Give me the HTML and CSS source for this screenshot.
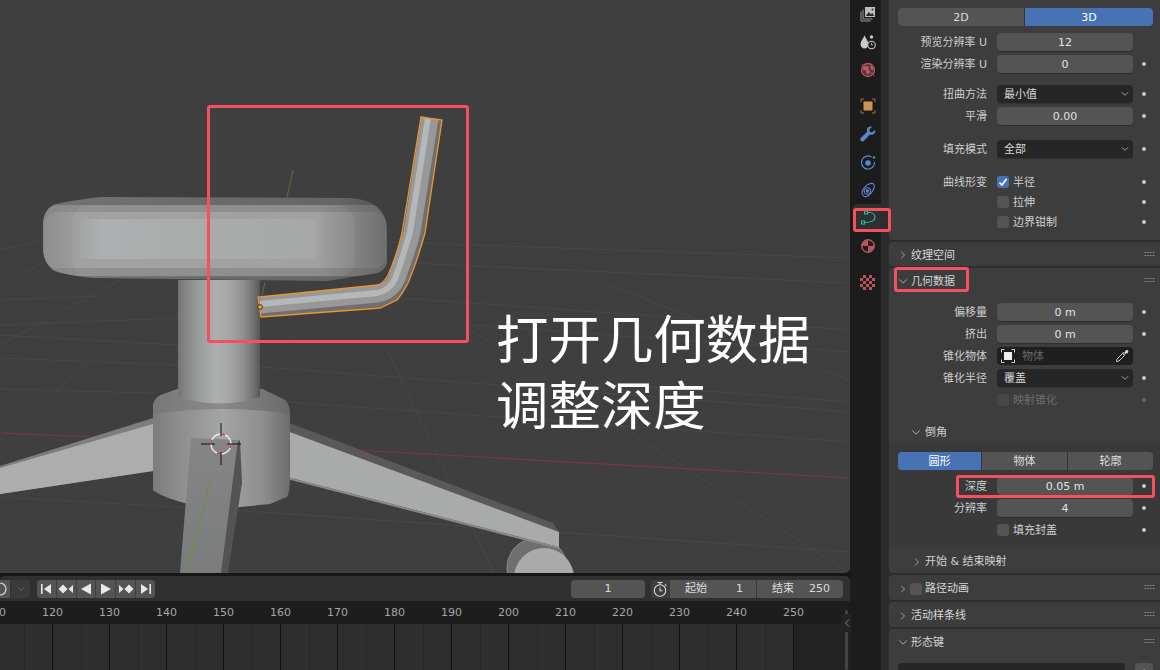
FILE: index.html
```html
<!DOCTYPE html>
<html lang="zh">
<head>
<meta charset="utf-8">
<title>Blender</title>
<link rel="stylesheet" href="styles.css">
</head>
<body>
<svg class="defs" width="0" height="0">
  <symbol id="chev-r" viewBox="0 0 8 12"><path d="M1.500 1.500 6 6l-4.500 4.500" fill="none" stroke="currentColor" stroke-width="1.200"/></symbol>
  <symbol id="chev-d" viewBox="0 0 12 8"><path d="M1.500 1.500 6 6l4.500-4.500" fill="none" stroke="currentColor" stroke-width="1.200"/></symbol>
</svg>
<div class="app">
  <div class="left">
    <div class="viewport">
      <svg class="scene" viewBox="0 0 850 573" width="850" height="573">
        <defs>
          <linearGradient id="cyl" x1="0" x2="1" y1="0" y2="0">
            <stop offset="0" stop-color="#747474"/><stop offset=".1" stop-color="#868686"/>
            <stop offset=".25" stop-color="#999a9a"/><stop offset=".45" stop-color="#adafaf"/>
            <stop offset=".62" stop-color="#a6a7a7"/><stop offset=".8" stop-color="#8f8f8f"/>
            <stop offset=".93" stop-color="#707070"/><stop offset="1" stop-color="#555"/>
          </linearGradient>
          <linearGradient id="collar" x1="0" x2="1" y1="0" y2="0">
            <stop offset="0" stop-color="#7b7b7b"/><stop offset=".2" stop-color="#8e8e8e"/>
            <stop offset=".5" stop-color="#a4a5a5"/><stop offset=".8" stop-color="#8e8e8e"/>
            <stop offset="1" stop-color="#6c6c6c"/>
          </linearGradient>
          <linearGradient id="rim" x1="0" x2="1" y1="0" y2="0">
            <stop offset="0" stop-color="#777"/><stop offset=".5" stop-color="#8a8a8a"/><stop offset="1" stop-color="#6a6a6a"/>
          </linearGradient>
          <linearGradient id="front" x1="0" x2="0" y1="0" y2="1">
            <stop offset="0" stop-color="#858585"/><stop offset="1" stop-color="#7b7c7c"/>
          </linearGradient>
          <linearGradient id="s1" x1="0" x2="1" y1="0" y2="0">
            <stop offset="0" stop-color="#727272"/><stop offset=".85" stop-color="#656565"/><stop offset="1" stop-color="#555"/>
          </linearGradient>
          <linearGradient id="s2" x1="0" x2="1" y1="0" y2="0">
            <stop offset="0" stop-color="#858585"/><stop offset=".08" stop-color="#8c8c8c"/><stop offset=".8" stop-color="#868686"/><stop offset="1" stop-color="#676767"/>
          </linearGradient>
          <linearGradient id="s3" x1="0" x2="1" y1="0" y2="0">
            <stop offset="0" stop-color="#8e8e8e"/><stop offset=".1" stop-color="#9c9c9c"/><stop offset=".8" stop-color="#9c9c9c"/><stop offset=".9" stop-color="#858585"/><stop offset="1" stop-color="#6f6f6f"/>
          </linearGradient>
          <linearGradient id="s4" x1="0" x2="1" y1="0" y2="0">
            <stop offset="0" stop-color="#a3a4a4"/><stop offset=".08" stop-color="#adafb0"/><stop offset=".5" stop-color="#a9abab"/><stop offset=".86" stop-color="#a7a8a8"/><stop offset=".92" stop-color="#989898"/><stop offset="1" stop-color="#8d8d8d"/>
          </linearGradient>
          <clipPath id="seatClip"><path d="M43 223Q44 210 53 205Q60 202 100 197L350 198Q368 199 377 207Q387 216 387 230V263Q384 271 377 273L327 281L93 278Q65 275 53 270Q44 262 43 250Z"/></clipPath>
          <clipPath id="backClip"><path d="M421 117 442 120 425 233Q417 262 408 283 403 293 397 300L380 308 261 317 258 297 378 285Q384 283 388 275 396 258 402 233Z"/></clipPath>
        </defs>
        <g class="grid">
          <path d="M0 358 178 365M0 389 153 393M262 367 850 412M287 402 850 442M0 497 230 510 850 552M103 350 0 440M387 350 494 573M600 383 850 402"/>
          <path d="M0 287 43 263M0 250 43 240M0 300 100 296M0 325 178 318M0 335 178 345M387 262 850 283M400 298 850 330M470 325 850 352M387 242 850 258M300 330 178 445M470 330 850 573M610 285 850 380M120 280 0 345"/>
        </g>
        <path d="M0 433 92 437M356 450 850 478" stroke="#79363f" stroke-width="1.200" fill="none"/>
        <path d="M293 170 287 197M265 282 260 305" stroke="#55693a" stroke-width="1.200" fill="none"/>
        <!-- wheel -->
        <circle cx="537" cy="568" r="30" fill="#6f6f6f" stroke="#8e8e8e"/>
        <circle cx="544" cy="578" r="30" fill="#a9aaaa"/>
        <!-- legs -->
        <path d="M0 466 153 418V471L0 494Z" fill="#7d7d7d"/>
        <path d="M0 468 153 424V471L0 494Z" fill="#adadad"/>
        <path d="M287 422 553 523 559 532V547L287 477Z" fill="#5a585a"/>
        <path d="M287 431 559 532V547L287 477Z" fill="#a9aaaa"/>
        <path d="M287 477 559 547V549L287 479Z" fill="#8a8a8a"/>
        <!-- collar -->
        <path d="M153 405Q154 398 161 395L178 389H262L285 400Q290 406 290 417V478Q290 492 287 497L270 504 230 508 184 503Q160 496 153 490Z" fill="url(#collar)"/>
        <path d="M153 408Q154 398 161 395L178 389H262L285 400Q290 406 290 414Q225 404 153 414Z" fill="url(#rim)"/>
        <!-- column -->
        <path d="M178 280V397Q219 410 260 397V280Z" fill="url(#cyl)"/>
        <!-- seat -->
        <g clip-path="url(#seatClip)">
          <rect x="40" y="195" width="350" height="90" fill="url(#s1)"/>
          <rect x="42" y="205" width="346" height="71" rx="16" fill="url(#s2)"/>
          <rect x="44" y="212" width="342" height="56" rx="12" fill="url(#s3)"/>
          <rect x="72" y="205" width="283" height="72" rx="18" fill="#fff" opacity=".05"/>
          <rect x="80" y="219" width="270" height="40" rx="3" fill="url(#s4)"/>
        </g>
        <!-- back -->
        <g clip-path="url(#backClip)">
          <path class="tube t1" d="M260 307 378 296Q392 294 398 282 407 260 414 233L432 119"/>
          <path class="tube t2" d="M260 305 377 294Q390 292 396 280 405 258 412 232L430 118"/>
          <path class="tube t3" d="M260 304 377 293Q389 291 395 279 403 257 410 232L428 118"/>
        </g>
        <path d="M421 117 442 120 425 233Q417 262 408 283 403 293 397 300L380 308 261 317 258 297 378 285Q384 283 388 275 396 258 402 233Z" fill="none" stroke="#ee952c" stroke-width="1.300"/>
        <circle cx="260" cy="307" r="2.400" fill="#f09a2e" stroke="#222" stroke-width=".8"/>
        <!-- front leg -->
        <path d="M240 440 242 483 228 573H215L232 445Z" fill="#545254"/>
        <path d="M191 438 238 440 221 573H180Z" fill="url(#front)"/>
        <path d="M210 483 186 573" stroke="#6f8f3f" stroke-width="1.100" fill="none"/>
        <!-- cursor -->
        <g fill="none">
          <circle cx="221" cy="444" r="10" stroke="#e9e9e9" stroke-width="1.400"/>
          <circle cx="221" cy="444" r="10" stroke="#d8333b" stroke-width="1.400" stroke-dasharray="4 11.700"/>
          <path d="M221 423V436M221 452V465M201 444H215M227 444H241" stroke="#111" stroke-width="1"/>
        </g>
      </svg>
      <div class="caption">打开几何数据<br>调整深度</div>
      <div class="mark mark-view"></div>
    </div>
    <div class="tl-head">
      <div class="tl-start">
        <span class="tl-cut"><svg width="10" height="18" viewBox="0 0 10 18"><circle cx="0" cy="9" r="6" fill="none" stroke="#d8d8d8" stroke-width="1.200"/></svg></span>
        <span class="tl-drop"><svg width="8" height="6"><use href="#chev-d"/></svg></span>
      </div>
      <div class="play">
        <span class="pbtn"><svg viewBox="0 0 14 12" width="14" height="12"><path d="M2 1h1.600v10H2zM12 1v10L5 6z"/></svg></span>
        <span class="pbtn"><svg viewBox="0 0 16 12" width="16" height="12"><path d="M5 1.500 9.500 6 5 10.500.5 6zM15 2v8L10.500 6z"/></svg></span>
        <span class="pbtn"><svg viewBox="0 0 14 12" width="14" height="12"><path d="M12 .5v11L2 6z"/></svg></span>
        <span class="pbtn"><svg viewBox="0 0 14 12" width="14" height="12"><path d="M2 .5v11L12 6z"/></svg></span>
        <span class="pbtn"><svg viewBox="0 0 16 12" width="16" height="12"><path d="M1 2v8l4.500-4zM11 1.500 15.500 6 11 10.500 6.500 6z"/></svg></span>
        <span class="pbtn"><svg viewBox="0 0 14 12" width="14" height="12"><path d="M12 1h-1.600v10H12zM2 1v10l7-5z"/></svg></span>
      </div>
      <div class="tl-frame">1</div>
      <div class="tl-range">
        <span class="tl-clock"><svg viewBox="0 0 16 16" width="16" height="16" fill="none" stroke="#d8d8d8" stroke-width="1.100"><circle cx="8" cy="9.500" r="5.700"/><path d="M5.500 1.500h5M8 1.500v2.300M8 6.500v3.300h2.500M13 3.500l1.300 1.300"/></svg></span>
        <span class="tl-val"><span>起始</span><span>1</span></span>
        <span class="tl-val tl-end"><span>结束</span><span>250</span></span>
      </div>
    </div>
    <div class="tl-ruler">
      <span>110</span><span>120</span><span>130</span><span>140</span><span>150</span><span>160</span><span>170</span><span>180</span><span>190</span><span>200</span><span>210</span><span>220</span><span>230</span><span>240</span><span>250</span>
    </div>
    <div class="tl-tracks">
      <div class="tl-range-bg"></div>
      <div class="tl-scroll"></div>
      <div class="tl-tab"><svg width="6" height="10"><use href="#chev-r" transform="matrix(-1 0 0 1 6 0)"/></svg></div>
    </div>
  </div>

  <nav class="tabs">
    <div class="tab"><svg viewBox="0 0 16 16"><path d="M1 5.500V15h9.500M3 3.500V13h9.500" fill="none" stroke="#9a9a9a"/><rect x="5" y="1" width="10" height="10" fill="#bdbdbd"/><path d="M5.800 10l3-4 2 2.300 1.500-1.300 2 3z" fill="#2a2a2a"/><circle cx="12.500" cy="3.500" r="1" fill="#2a2a2a"/></svg></div>
    <div class="tab"><svg viewBox="0 0 16 16"><path d="M4.500 1.500C5.500 4 8.500 7 8.500 10.500 8.500 12.800 6.500 14.500 4.500 14.500S.5 12.800.5 10.500C.5 7 3.500 4 4.500 1.500Z" fill="#c9c9c9"/><circle cx="11.500" cy="3" r="1.700" fill="#c9c9c9"/><circle cx="11.500" cy="11" r="3.800" fill="#1d1d1d" stroke="#c9c9c9" stroke-width="1.100"/><path d="M11.500 9v2h1.500" fill="none" stroke="#c9c9c9" stroke-width=".8"/></svg></div>
    <div class="tab"><svg viewBox="0 0 16 16"><circle cx="8" cy="8" r="6.500" fill="#5b343a" stroke="#b2555f" stroke-width="1.300"/><path d="M3 5.500 6 4l3 1-1 2.500 2 1.500-1.500 3.500-2-1-.5-3L3 7.500zM10 3l2.500 1.500 1 3-2 .5z" fill="#b9606a"/><path d="M1.500 2 14.500 14" stroke="#b2555f"/></svg></div>
    <div class="tab tab-gap"><svg viewBox="0 0 16 16"><path d="M1 4V1h3M12 1h3v3M15 12v3h-3M4 15H1v-3" fill="none" stroke="#9a7048" stroke-width="1"/><rect x="3.500" y="3.500" width="9" height="9" fill="#d0924f"/></svg></div>
    <div class="tab"><svg viewBox="0 0 16 16"><path d="M15 3.800 12.200 6.400 9.800 5.800 9.400 3.400 12.100.8C9.800 0 7.500 1 7 3.200c-.2 1 0 1.800.2 2.500L1 11.800c-1 1-1 2 0 3s2.100.8 3-.1l6-6.100c.8.300 1.800.3 2.800 0 2.200-.7 3-3 2.200-4.800Z" fill="#5a86cc"/></svg></div>
    <div class="tab"><svg viewBox="0 0 16 16"><path d="M11.500 3A6.500 6.500 0 1 0 14.500 8" fill="none" stroke="#5a86cc" stroke-width="1.200"/><circle cx="8" cy="9" r="2.800" fill="#5a86cc"/><circle cx="14" cy="3.500" r="1.300" fill="#5a86cc"/></svg></div>
    <div class="tab"><svg viewBox="0 0 16 16" fill="none" stroke="#5a86cc" stroke-width="1.100"><path d="M2.500 8.500C4 4.500 9 .5 13 1.500c2 1 1.500 5-1 8.500-2.500 3.500-5.500 5-7.500 4.500S1.500 11.500 2.500 8.500Z"/><circle cx="7.300" cy="9" r="3.200"/><circle cx="7.300" cy="9" r="1.200" fill="#5a86cc"/></svg></div>
    <div class="tab tab-active"><svg viewBox="0 0 16 16" fill="none" stroke="#17c69c" stroke-width="1.100"><path d="M7 2.500h2.500C13 2.500 15 5 15 7.500 15 10.500 11 12.500 5 12.500"/><rect x="4.500" y="1" width="3" height="3"/><rect x="1.500" y="11" width="3" height="3"/></svg></div>
    <div class="tab"><svg viewBox="0 0 16 16"><circle cx="8" cy="8" r="6.500" fill="#b3545e" stroke="#b3545e"/><path d="M8 2.500A5.500 5.500 0 0 1 13.500 8H8ZM2.500 8A5.500 5.500 0 0 0 8 13.500V8Z" fill="#241a1c"/></svg></div>
    <div class="tab tab-gap"><span class="checker"></span></div>
  </nav>

  <main class="props">
    <section class="panel panel-first">
      <div class="seg seg-2"><span>2D</span><span class="on">3D</span></div>
      <div class="row mt7"><label>预览分辨率 U</label><div class="field num">12</div></div>
      <div class="row"><label>渲染分辨率 U</label><div class="field num">0</div><i class="dot"></i></div>
      <div class="row mt12"><label>扭曲方法</label><div class="field sel">最小值<svg width="8" height="6"><use href="#chev-d"/></svg></div><i class="dot"></i></div>
      <div class="row"><label>平滑</label><div class="field num">0.00</div><i class="dot"></i></div>
      <div class="row mt15"><label>填充模式</label><div class="field sel">全部<svg width="8" height="6"><use href="#chev-d"/></svg></div><i class="dot"></i></div>
      <div class="row crow mt14"><label>曲线形变</label><div class="chk"><span class="box box-on"><svg viewBox="0 0 12 12" width="12" height="12"><path d="M2.500 6.500 5 9l4.500-6" fill="none" stroke="#fff" stroke-width="1.700"/></svg></span>半径</div><i class="dot"></i></div>
      <div class="row crow"><label></label><div class="chk"><span class="box"></span>拉伸</div><i class="dot"></i></div>
      <div class="row crow"><label></label><div class="chk"><span class="box"></span>边界钳制</div><i class="dot"></i></div>
    </section>

    <section class="panel">
      <header class="phead"><svg class="ch-r" width="6" height="10"><use href="#chev-r"/></svg><span>纹理空间</span><b class="grip"></b></header>
    </section>

    <section class="panel">
      <header class="phead"><svg class="ch-d" width="10" height="7"><use href="#chev-d"/></svg><span>几何数据</span><b class="grip"></b></header>
      <div class="row mt11"><label>偏移量</label><div class="field num">0 m</div><i class="dot"></i></div>
      <div class="row"><label>挤出</label><div class="field num">0 m</div><i class="dot"></i></div>
      <div class="row"><label>锥化物体</label><div class="field obj">
        <svg width="14" height="14" viewBox="0 0 14 14"><path d="M.5 3.500v-3h3M10.500.5h3v3M13.500 10.500v3h-3M3.500 13.500h-3v-3" fill="none" stroke="#cfcfcf"/><rect x="3" y="3" width="8" height="8" fill="#eee"/></svg>
        <span class="ph">物体</span>
        <svg class="drop" width="14" height="14" viewBox="0 0 14 14"><path d="M1.500 12.500 2 10l5.500-5.500 2 2L4 12z" fill="#1f1f1f" stroke="#c8c8c8"/><path d="M7 3.500 8.500 5l1-1 .5.500L9 5.500l.5.500L11 4.500c2 .5 3-2 2-3s-3.500 0-3 2z" fill="#d8d8d8"/></svg>
      </div></div>
      <div class="row"><label>锥化半径</label><div class="field sel">覆盖<svg width="8" height="6"><use href="#chev-d"/></svg></div><i class="dot"></i></div>
      <div class="row crow2 off"><label></label><div class="chk"><span class="box"></span>映射锥化</div><i class="dot"></i></div>

      <header class="shead"><svg class="ch-d" width="10" height="7"><use href="#chev-d"/></svg><span>倒角</span></header>
      <div class="sbody">
        <div class="seg seg-3"><span class="on">圆形</span><span>物体</span><span>轮廓</span></div>
        <div class="row mt7"><label>深度</label><div class="field num">0.05 m</div><i class="dot"></i></div>
        <div class="row"><label>分辨率</label><div class="field num">4</div><i class="dot"></i></div>
        <div class="row"><label></label><div class="chk"><span class="box"></span>填充封盖</div><i class="dot"></i></div>
      </div>
      <header class="shead shead-end"><svg class="ch-r" width="6" height="10"><use href="#chev-r"/></svg><span>开始 &amp; 结束映射</span></header>
    </section>

    <section class="panel">
      <header class="phead"><svg class="ch-r" width="6" height="10"><use href="#chev-r"/></svg><span class="box hbox"></span><span>路径动画</span><b class="grip"></b></header>
    </section>
    <section class="panel">
      <header class="phead"><svg class="ch-r" width="6" height="10"><use href="#chev-r"/></svg><span>活动样条线</span><b class="grip"></b></header>
    </section>
    <section class="panel panel-last">
      <header class="phead"><svg class="ch-d" width="10" height="7"><use href="#chev-d"/></svg><span>形态键</span><b class="grip"></b></header>
      <div class="keys"><div class="keylist"></div><div class="plus">+</div></div>
    </section>
  </main>
  <div class="mark mark-tab"></div>
  <div class="mark mark-geo"></div>
  <div class="mark mark-depth"></div>
</div>
</body>
</html>
```

FILE: styles.css
```css
* { box-sizing: border-box; }
html, body { margin: 0; height: 100%; overflow: hidden; background: #161616; }
body { font: 11px/1 "DejaVu Sans", "Noto Sans CJK SC", sans-serif; color: #d6d6d6; }
.defs { position: absolute; }

.app { position: relative; display: flex; width: 1160px; height: 670px; }

/* left column */
.left { width: 850px; flex: none; display: flex; flex-direction: column; gap: 3px; background: #161616; }
.viewport { position: relative; height: 573px; flex: none; background: #3f3f3f; border-radius: 0 0 5px 0; overflow: hidden; }
.scene { display: block; }
.grid path { fill: none; stroke: #484848; stroke-width: 1; }
.tube { fill: none; }
.t1 { stroke: #6f6f6f; stroke-width: 22; }
.t2 { stroke: #989898; stroke-width: 17; }
.t3 { stroke: #b5b7b8; stroke-width: 6; }
.caption { position: absolute; left: 496px; top: 303px; font: 52.400px/66px "Noto Sans CJK SC", sans-serif; color: #fff; white-space: nowrap; }

/* annotation frames */
.mark { position: absolute; border: 3px solid #f5505f; border-radius: 3px; }
.mark-view { left: 207px; top: 105px; width: 262px; height: 238px; }
.mark-tab { left: 853px; top: 208px; width: 38px; height: 24px; }
.mark-geo { left: 894px; top: 267px; width: 75px; height: 25px; }
.mark-depth { left: 956px; top: 475px; width: 199px; height: 23px; }

/* timeline */
.tl-head { height: 25px; flex: none; display: flex; align-items: center; background: #303030; border-radius: 5px 5px 0 0; color: #dcdcdc; }
.tl-start { display: flex; width: 30px; height: 18px; margin-right: 7px; }
.tl-cut { width: 10px; background: #545454; }
.tl-cut svg { display: block; }
.tl-drop { width: 20px; margin-left: 1px; display: flex; align-items: center; justify-content: center; background: #3a3a3a; border-radius: 0 4px 4px 0; color: #777; }
.play { display: flex; height: 18px; width: 118px; border-radius: 4px; overflow: hidden; gap: 1px; background: #3e3e3e; }
.pbtn { flex: 1; display: flex; align-items: center; justify-content: center; background: #545454; }
.pbtn svg { fill: #e8e8e8; display: block; }
.tl-frame { width: 74px; height: 18px; margin-left: auto; background: #545454; border-radius: 4px; display: flex; align-items: center; justify-content: center; }
.tl-range { display: flex; gap: 1px; width: 192px; height: 18px; margin: 0 7px 0 6px; border-radius: 4px; overflow: hidden; background: #3a3a3a; }
.tl-clock { width: 18px; display: flex; align-items: center; justify-content: center; background: #3e3e3e; }
.tl-val { width: 86px; flex: none; display: flex; align-items: center; justify-content: space-between; padding: 0 13px 0 15px; background: #545454; }
.tl-end { flex: 1; padding: 0 13px 0 15px; }
.tl-ruler { height: 23px; flex: none; margin-top: -3px; display: flex; background: #1d1d1d; color: #a6a6a6; overflow: hidden; align-items: center; }
.tl-ruler span { width: 57px; flex: none; text-align: center; }
.tl-ruler span:first-child { margin-left: -33px; }
.tl-tracks { position: relative; flex: 1; margin-top: -3px; background: #232323; }
.tl-range-bg { width: 794px; height: 100%; background:
  repeating-linear-gradient(90deg, transparent 0 52px, #121212 52px 53px, transparent 53px 57px),
  repeating-linear-gradient(90deg, transparent 0 24px, #262626 24px 25px, transparent 25px 57px),
  #2e2e2e; }
.tl-scroll { position: absolute; left: 845px; top: -14px; bottom: 0; width: 3px; border-radius: 2px; background: #444; }
.tl-tab { position: absolute; left: 842px; top: -10px; width: 9px; height: 18px; display: flex; align-items: center; justify-content: center; color: #888; background: #242424; border-radius: 4px 0 0 4px; }

/* tabs */
.tabs { width: 31px; flex: none; padding-left: 3px; background: #1c1c1c; }
.tab { height: 28px; display: flex; align-items: center; justify-content: center; padding-left: 1px; }
.tab svg { width: 16px; height: 16px; display: block; }
.tab-gap { margin-top: 8px; }
.tab-active { background: #303030; border-radius: 4px 0 0 4px; }
.checker { width: 15px; height: 15px; background: repeating-conic-gradient(#b3545e 0 25%, #241a1c 0 50%) 0 0 / 6px 6px; }

/* properties */
.props { flex: 1; padding-left: 8px; background: #2d2d2d; overflow: hidden; display: flex; flex-direction: column; gap: 2px; }
.panel { flex: none; background: #3d3d3d; border-radius: 4px 0 0 4px; }
.panel-first { padding: 8px 7px 8px 9px; border-radius: 0 0 0 4px; }
.panel-last { flex: 1; }
.panel:not(.panel-first) > .row { margin-left: 9px; }

.row { display: grid; grid-template-columns: 99px 136px 1fr; height: 18px; margin-top: 4px; align-items: center; }
.crow { height: 20px; margin-top: 0; }
.crow2 { margin-top: 4px; }
.row label { padding-right: 10px; text-align: right; white-space: nowrap; color: #cdcdcd; }
.mt7 { margin-top: 7px; }
.mt11 { margin-top: 11px; }
.mt12 { margin-top: 12px; }
.mt14 { margin-top: 14px; }
.mt15 { margin-top: 15px; }
.field { height: 18px; border-radius: 4px; display: flex; align-items: center; }
.num { background: #545454; justify-content: center; box-shadow: 0 1px 0 #2f2f2f; color: #e2e2e2; }
.sel { background: #262626; padding: 0 4px 0 7px; justify-content: space-between; box-shadow: 0 1px 0 #333; color: #d8d8d8; }
.sel svg { color: #c8c8c8; }
.obj { background: #1f1f1f; padding: 0 4px; position: relative; }
.ph { margin-left: 7px; color: #686868; }
.drop { margin-left: auto; }
.dot { display: block; width: 4px; height: 4px; margin-left: 9px; border-radius: 50%; background: #c8c8c8; }
.chk { display: flex; align-items: center; gap: 4px; color: #d0d0d0; white-space: nowrap; }
.box { display: block; width: 12px; height: 12px; flex: none; border-radius: 3px; background: #545454; }
.box-on { background: #4772b3; }
.box svg { display: block; }
.off .chk { color: #6c6c6c; }
.off .box { background: #484848; }
.off .dot { background: #666; }

.seg { display: flex; height: 18px; gap: 1px; border-radius: 4px; overflow: hidden; background: #333; }
.seg span { display: flex; align-items: center; justify-content: center; background: #545454; color: #dedede; }
.seg .on { background: #4772b3; color: #fff; }
.seg-2 { width: 255px; }
.seg-2 span { flex: 1; }
.seg-2 .on { flex: 0 0 128px; }
.seg-3 { width: 255px; }
.seg-3 span { flex: 1; }
.seg-3 span:first-child { flex: 0 0 83px; }

.phead { position: relative; display: flex; align-items: center; height: 24px; padding: 2px 0 0 11px; color: #d6d6d6; }
.phead span { white-space: nowrap; }
.phead .ch-r { width: 6px; margin-right: 5px; flex: none; color: #aaa; }
.phead .ch-d { margin: 0 3px 0 -2px; flex: none; color: #aaa; }
.hbox { margin: 0 3px 0 -1px; }
.panel:nth-child(5) .phead, .panel:nth-child(4) .phead { height: 25px; }
.grip { position: absolute; left: 255px; top: 9px; width: 11px; height: 6px; background: radial-gradient(circle, #9a9a9a 0 .7px, transparent 1px) 0 0 / 2.750px 3px; }
.shead { display: flex; align-items: center; height: 24px; margin-top: 10px; padding: 2px 0 0 22px; color: #d0d0d0; }
.shead .ch-d { margin-right: 4px; color: #aaa; }
.shead-end { height: 25px; margin-top: 1px; padding-left: 25px; }
.shead-end .ch-r { margin-right: 5px; color: #aaa; }
.sbody { padding: 9px 7px 8px 9px; background: #393939; }
.keys { display: flex; justify-content: space-between; padding: 10px 7px 0 9px; }
.keylist { width: 227px; height: 20px; background: #262626; border-radius: 4px; }
.plus { width: 18px; height: 18px; background: #545454; border-radius: 4px; display: flex; align-items: center; justify-content: center; }
```
